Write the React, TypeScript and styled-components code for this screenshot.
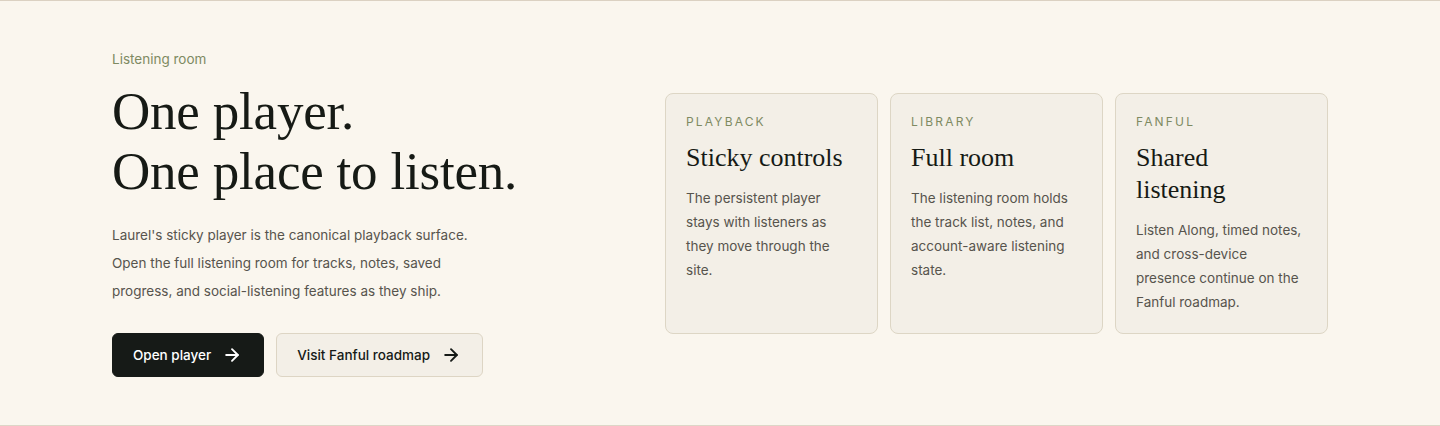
import styled, { createGlobalStyle } from "styled-components";
import { ArrowRight } from "lucide-react";

const GlobalStyle = createGlobalStyle`
  * { box-sizing: border-box; }
  html, body {
    margin: 0;
    padding: 0;
    background: #faf6ee;
  }
  body {
    font-family: Inter, "Noto Sans", sans-serif;
    color: #171a16;
  }
`;

const Section = styled.section`
  border-top: 1px solid #dbd1c2;
  border-bottom: 1px solid #ddd6c7;
  background: #faf6ee;
  padding: 48px 112px;
  display: grid;
  grid-template-columns: 1fr 663px;
  gap: 48px;
  align-items: center;
`;

const Intro = styled.div`
  display: flex;
  flex-direction: column;
`;

const Eyebrow = styled.span`
  font-size: 13.5px;
  line-height: 20px;
  color: #7e8a62;
`;

const Heading = styled.h1`
  margin: 12px 0 0;
  font-family: "Liberation Serif", "DejaVu Serif", serif;
  font-weight: 400;
  font-size: 53px;
  line-height: 60px;
  letter-spacing: -0.2px;
  color: #161a15;
`;

const Lead = styled.p`
  margin: 20px 0 0;
  max-width: 362px;
  font-size: 13.5px;
  line-height: 28px;
  color: #57544d;
`;

const Actions = styled.div`
  display: flex;
  gap: 12px;
  margin-top: 28px;
`;

const Button = styled.a<{ $primary?: boolean }>`
  display: inline-flex;
  align-items: center;
  gap: 11px;
  height: 44px;
  padding: 0 21px 0 20px;
  border-radius: 6px;
  font-size: 13.5px;
  font-weight: 500;
  text-decoration: none;
  cursor: pointer;
  background: ${(p) => (p.$primary ? "#161a17" : "#f3efe7")};
  color: ${(p) => (p.$primary ? "#ffffff" : "#161a17")};
  border: 1px solid ${(p) => (p.$primary ? "#161a17" : "#ddd5c4")};
`;

const Cards = styled.div`
  display: grid;
  grid-template-columns: repeat(3, 1fr);
  gap: 12px;
`;

const Card = styled.article`
  height: 241px;
  padding: 20px;
  border: 1px solid #ddd6c5;
  border-radius: 8px;
  background: #f3efe7;
  display: flex;
  flex-direction: column;
`;

const Kicker = styled.span`
  font-size: 12px;
  line-height: 16px;
  letter-spacing: 0.18em;
  text-transform: uppercase;
  color: #7e8a62;
`;

const CardTitle = styled.h2`
  margin: 12px 0 0;
  max-width: 160px;
  font-family: "Liberation Serif", "DejaVu Serif", serif;
  font-weight: 400;
  font-size: 26px;
  line-height: 32px;
  color: #161a15;
`;

const CardText = styled.p`
  margin: 12px 0 0;
  font-size: 13.5px;
  line-height: 24px;
  color: #57544d;
`;

const cards = [
  {
    kicker: "Playback",
    title: "Sticky controls",
    text: "The persistent player stays with listeners as they move through the site.",
  },
  {
    kicker: "Library",
    title: "Full room",
    text: "The listening room holds the track list, notes, and account-aware listening state.",
  },
  {
    kicker: "Fanful",
    title: "Shared listening",
    text: "Listen Along, timed notes, and cross-device presence continue on the Fanful roadmap.",
  },
];

export default function App() {
  return (
    <>
      <GlobalStyle />
      <Section>
        <Intro>
          <Eyebrow>Listening room</Eyebrow>
          <Heading>
            One player.
            <br />
            One place to listen.
          </Heading>
          <Lead>
            Laurel's sticky player is the canonical playback surface. Open the full listening
            room for tracks, notes, saved progress, and social-listening features as they ship.
          </Lead>
          <Actions>
            <Button $primary>
              Open player
              <ArrowRight size={20} strokeWidth={2.25} />
            </Button>
            <Button>
              Visit Fanful roadmap
              <ArrowRight size={20} strokeWidth={2.25} />
            </Button>
          </Actions>
        </Intro>
        <Cards>
          {cards.map((c) => (
            <Card key={c.kicker}>
              <Kicker>{c.kicker}</Kicker>
              <CardTitle>{c.title}</CardTitle>
              <CardText>{c.text}</CardText>
            </Card>
          ))}
        </Cards>
      </Section>
    </>
  );
}
